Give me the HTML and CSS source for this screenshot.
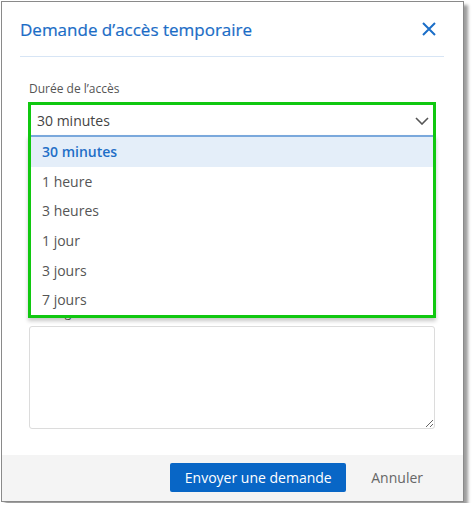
FILE: index.html
```html
<!DOCTYPE html>
<html lang="fr">
<head>
<meta charset="utf-8">
<title>Demande d'accès temporaire</title>
<link rel="stylesheet" href="styles.css">
</head>
<body>
<div class="dialog">
  <header class="header">
    <h1 class="title">Demande d’accès temporaire</h1>
    <button class="close" aria-label="Fermer">
      <svg width="14" height="14" viewBox="0 0 14 14"><path d="M1 1 L13 13 M13 1 L1 13" stroke="#1b6ec8" stroke-width="2" fill="none"/></svg>
    </button>
  </header>
  <div class="body">
    <div class="field">
      <label class="label">Durée de l’accès</label>
      <div class="combo">
        <div class="select">
          <span class="value">30 minutes</span>
          <svg class="chev" width="14" height="8" viewBox="0 0 14 8"><path d="M1 1 L7 7 L13 1" stroke="#555" stroke-width="1.6" fill="none"/></svg>
        </div>
        <div class="menu">
          <ul class="options">
            <li class="option selected">30 minutes</li>
            <li class="option">1 heure</li>
            <li class="option">3 heures</li>
            <li class="option">1 jour</li>
            <li class="option">3 jours</li>
            <li class="option">7 jours</li>
          </ul>
        </div>
      </div>
    </div>
    <div class="field message">
      <label class="label">Message</label>
      <textarea class="textarea"></textarea>
    </div>
  </div>
  <footer class="footer">
    <button class="btn primary">Envoyer une demande</button>
    <button class="btn link">Annuler</button>
  </footer>
</div>
</body>
</html>
```
FILE: styles.css
```css
* { box-sizing: border-box; }
html, body { margin: 0; background: #fff; }
body { padding: 1px; font-family: "Open Sans", "Noto Sans", sans-serif; }

.dialog {
  width: 463px;
  height: 501px;
  border: 1px solid #8a8a8a;
  background: #fff;
  box-shadow: 4px 4px 3px rgba(0,0,0,0.38);
  display: flex;
  flex-direction: column;
}

.header {
  display: flex;
  justify-content: space-between;
  align-items: flex-start;
  margin: 0 19px 0 18px;
  padding: 16px 0 14px 0;
  border-bottom: 1px solid #d7e5f5;
}
.title {
  margin: 0;
  font-size: 17px;
  line-height: 24px;
  font-weight: 400;
  color: #1a6cc6;
  -webkit-text-stroke: 0.2px #1a6cc6;
}
.close {
  border: 0;
  background: none;
  padding: 0;
  margin: 4px 8px 0 0;
  width: 14px;
  height: 14px;
  display: block;
}
.close svg { display: block; }

.body {
  flex: 1;
  padding: 24px 28px 0 27px;
}
.field { display: flex; flex-direction: column; }
.label {
  font-size: 12px;
  line-height: 16px;
  color: #555;
  margin-bottom: 5px;
}

.combo {
  position: relative;
  margin: 0 -1px;
  border: 3px solid #10c810;
  border-bottom: 0;
}
.select {
  height: 30px;
  display: flex;
  align-items: center;
  justify-content: space-between;
  padding: 0 4px 0 6px;
  background: #fff;
}
.value { font-size: 14px; color: #444; }
.chev { display: block; margin-top: 1px; }

.menu {
  position: absolute;
  top: 100%;
  left: -3px;
  right: -3px;
  border: 3px solid #10c810;
  border-top: 0;
  background: #fff;
  box-shadow: 0 3px 4px rgba(0,0,0,0.22);
  z-index: 2;
}
.options {
  list-style: none;
  margin: 0;
  padding: 0;
  border-top: 2px solid #7aa8dc;
}
.option {
  height: 29.6px;
  display: flex;
  align-items: center;
  padding-left: 11px;
  font-size: 14px;
  color: #555;
}
.option.selected {
  background: #e4eef9;
  color: #1f6fc7;
  font-weight: 600;
}

.message { margin-top: 170px; }
.textarea {
  height: 103px;
  border: 1px solid #dcdcdc;
  border-radius: 3px;
  resize: vertical;
  font-family: inherit;
  margin: 0;
}

.footer {
  height: 46px;
  background: #f4f4f4;
  display: flex;
  justify-content: flex-end;
  align-items: flex-start;
  gap: 9px;
  padding: 8px 24px 0 0;
}
.btn {
  font-family: inherit;
  font-size: 14px;
  height: 29px;
  border: 0;
  cursor: pointer;
}
.primary {
  width: 176px;
  background: #0866c6;
  color: #fff;
  border-radius: 2px;
}
.link {
  background: none;
  color: #666;
  padding: 0 16px;
}
```
